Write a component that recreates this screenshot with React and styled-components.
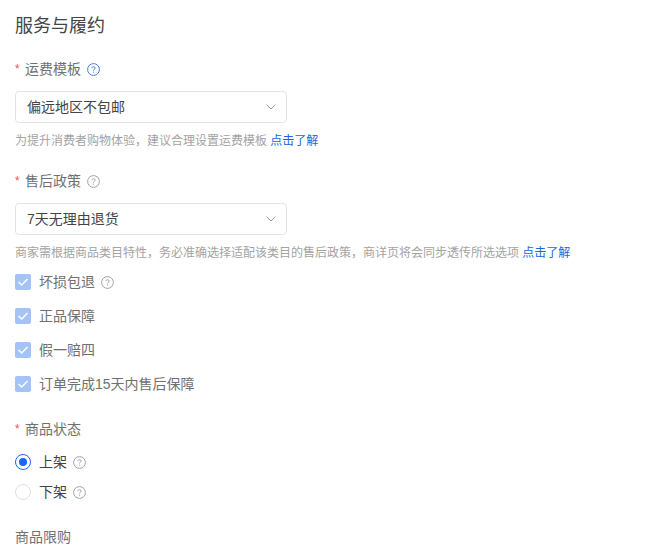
import React from "react";
import styled, { createGlobalStyle } from "styled-components";

const Global = createGlobalStyle`
  html, body { margin: 0; padding: 0; background: #fff; overflow: hidden; }
  body { font-family: "Liberation Sans", "Noto Sans CJK SC", sans-serif; }
`;
const Page = styled.div`
  padding: 14px 0 0 15px;
  height: 538px;
  overflow: hidden;
`;
const Title = styled.h2`
  margin: 0 0 21px;
  font-size: 18px;
  font-weight: 400;
  line-height: 24px;
  color: #444;
`;
const Section = styled.section`
  margin-bottom: ${(p) => p.$gap}px;
`;
const Label = styled.div`
  display: flex;
  align-items: center;
  height: 20px;
  font-size: 14px;
  line-height: 20px;
  color: #707070;
`;
const Star = styled.span`
  color: #f0505a;
  font-size: 12px;
  width: 10px;
`;
const Help = styled.svg`
  width: 13px;
  height: 13px;
  margin-left: 6px;
  flex: none;
  color: ${(p) => (p.$blue ? "#2d73e0" : "#999")};
`;
const ItemText = styled.span`
  margin-top: -2px;
`;
const Select = styled.div`
  box-sizing: border-box;
  width: 272px;
  height: 32px;
  margin-top: 12px;
  padding: 0 10px 0 11px;
  display: flex;
  align-items: center;
  justify-content: space-between;
  border: 1px solid #e3e3e3;
  border-radius: 4px;
  font-size: 14px;
  color: #444;
`;
const Hint = styled.div`
  margin-top: 9px;
  font-size: 12px;
  line-height: 18px;
  color: #a3a3a3;
  white-space: nowrap;
`;
const Link = styled.span`
  color: #1a66d9;
`;
const Checks = styled.div`
  display: flex;
  flex-direction: column;
  gap: 14px;
  margin-top: 10px;
`;
const CheckRow = styled.div`
  display: flex;
  align-items: center;
  height: 20px;
  font-size: 14px;
  color: #707070;
`;
const Box = styled.span`
  width: 16px;
  height: 16px;
  border-radius: 2px;
  background: #a4c3f8;
  margin-right: 8px;
  display: flex;
  align-items: center;
  justify-content: center;
  flex: none;
`;
const Radios = styled.div`
  display: flex;
  flex-direction: column;
  gap: 10px;
  margin-top: 13px;
`;
const RadioRow = styled.div`
  display: flex;
  align-items: center;
  height: 20px;
  font-size: 14px;
  color: #444;
`;
const Radio = styled.span`
  box-sizing: border-box;
  width: 16px;
  height: 16px;
  border-radius: 50%;
  margin-right: 8px;
  flex: none;
  border: 1px solid ${(p) => (p.$on ? "#1966ff" : "#e0e0e0")};
  display: flex;
  align-items: center;
  justify-content: center;
  &::after {
    content: "";
    display: ${(p) => (p.$on ? "block" : "none")};
    width: 8px;
    height: 8px;
    border-radius: 50%;
    background: #1966ff;
  }
`;
const Plain = styled.div`
  font-size: 14px;
  line-height: 20px;
  color: #707070;
`;

const QuestionIcon = ({ blue }) => (
  <Help $blue={blue} viewBox="0 0 13 13" fill="none" stroke="currentColor">
    <circle cx="6.5" cy="6.5" r="5.9" strokeWidth="0.9" />
    <path d="M4.9 5.2c0-.9.7-1.5 1.6-1.5s1.6.6 1.6 1.4c0 1.2-1.6 1.2-1.6 2.4" strokeWidth="0.9" />
    <path d="M6.5 8.7v.9" strokeWidth="0.9" />
  </Help>
);
const Chevron = () => (
  <svg width="10" height="6" viewBox="0 0 10 6" fill="none" stroke="#999" strokeWidth="1">
    <path d="M.5.7L5 5l4.5-4.3" />
  </svg>
);
const Tick = () => (
  <svg width="12" height="10" viewBox="0 0 12 10" fill="none" stroke="#fff" strokeWidth="1.5">
    <path d="M1.5 5l3.2 3 5.8-6" />
  </svg>
);

const checks = [
  { text: "坏损包退", help: true },
  { text: "正品保障" },
  { text: "假一赔四" },
  { text: "订单完成15天内售后保障" },
];

export default function App() {
  return (
    <Page>
      <Global />
      <Title>服务与履约</Title>
      <Section $gap={21}>
        <Label><Star>*</Star>运费模板<QuestionIcon blue /></Label>
        <Select><ItemText>偏远地区不包邮</ItemText><Chevron /></Select>
        <Hint>为提升消费者购物体验，建议合理设置运费模板 <Link>点击了解</Link></Hint>
      </Section>
      <Section $gap={25}>
        <Label><Star>*</Star>售后政策<QuestionIcon /></Label>
        <Select><ItemText>7天无理由退货</ItemText><Chevron /></Select>
        <Hint>商家需根据商品类目特性，务必准确选择适配该类目的售后政策，商详页将会同步透传所选选项 <Link>点击了解</Link></Hint>
        <Checks>
          {checks.map((c) => (
            <CheckRow key={c.text}><Box><Tick /></Box><ItemText>{c.text}</ItemText>{c.help && <QuestionIcon />}</CheckRow>
          ))}
        </Checks>
      </Section>
      <Section $gap={25}>
        <Label><Star>*</Star>商品状态</Label>
        <Radios>
          <RadioRow><Radio $on /><ItemText>上架</ItemText><QuestionIcon /></RadioRow>
          <RadioRow><Radio /><ItemText>下架</ItemText><QuestionIcon /></RadioRow>
        </Radios>
      </Section>
      <Plain>商品限购</Plain>
    </Page>
  );
}
